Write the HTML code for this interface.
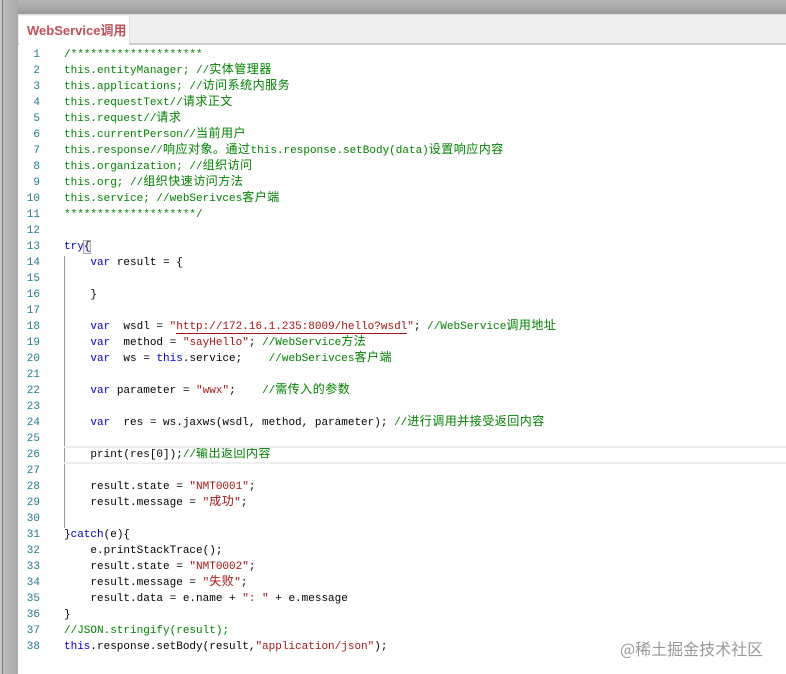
<!DOCTYPE html>
<html><head><meta charset="utf-8"><style>
*{margin:0;padding:0;box-sizing:border-box}
body{width:786px;height:674px;overflow:hidden;background:#fff;position:relative;font-family:"Liberation Sans","Noto Sans CJK SC",sans-serif}
.top{position:absolute;left:0;top:0;width:786px;height:14px;background:linear-gradient(#b8b8b8,#9a9a9a)}
.left{position:absolute;left:0;top:0;width:18px;height:674px;background:linear-gradient(90deg,#c8c8c8 0,#c8c8c8 2px,#777 2px,#777 3px,#bdbdbd 3px,#a8a8a8 18px)}
.tabbar{position:absolute;left:18px;top:14px;width:768px;height:31px;background:#eee;border-top:1px solid #ddd;border-bottom:2px solid #ccc}
.tab{position:absolute;left:1px;top:1px;width:111px;height:29px;background:#fff;border-right:1px solid #ddd;color:#c0505a;font-weight:bold;font-size:13px;line-height:30px;padding-left:8px}
.code{position:absolute;left:18px;top:47px;right:0;font-family:"Liberation Mono",monospace;font-size:11px}
.l{height:16px;line-height:16px;white-space:pre;position:relative}
.n{position:absolute;left:0;top:0;width:22px;text-align:right;color:#237893;font-size:11px}
.t{position:absolute;left:46px;top:0;height:16px;line-height:16px;color:#000}
.c{color:#008000}.k{color:#0000cc}.s{color:#a31515}
.guide{position:absolute;left:64px;top:256px;width:1px;height:272px;background:#999}
.wm{position:absolute;left:620px;top:636px;color:#999;font-size:16px;font-family:"Noto Sans CJK SC",sans-serif}
.u{border-bottom:1px solid #a31515}
.b{outline:1px solid #aaa;background:#eef}
.code span.z{font-family:"Noto Sans CJK SC",sans-serif;font-size:12px;letter-spacing:0.5px;line-height:0}
</style></head><body>
<div class="top"></div><div class="left"></div>
<div class="tabbar"><div class="tab">WebService调用</div></div>
<div class="guide"></div>
<div class="code">
<div class="l"><span class="n">1</span><span class="t c">/********************</span></div>
<div class="l"><span class="n">2</span><span class="t c">this.entityManager; //<span class="z">实体管理器</span></span></div>
<div class="l"><span class="n">3</span><span class="t c">this.applications; //<span class="z">访问系统内服务</span></span></div>
<div class="l"><span class="n">4</span><span class="t c">this.requestText//<span class="z">请求正文</span></span></div>
<div class="l"><span class="n">5</span><span class="t c">this.request//<span class="z">请求</span></span></div>
<div class="l"><span class="n">6</span><span class="t c">this.currentPerson//<span class="z">当前用户</span></span></div>
<div class="l"><span class="n">7</span><span class="t c">this.response//<span class="z">响应对象。通过</span>this.response.setBody(data)<span class="z">设置响应内容</span></span></div>
<div class="l"><span class="n">8</span><span class="t c">this.organization; //<span class="z">组织访问</span></span></div>
<div class="l"><span class="n">9</span><span class="t c">this.org; //<span class="z">组织快速访问方法</span></span></div>
<div class="l"><span class="n">10</span><span class="t c">this.service; //webSerivces<span class="z">客户端</span></span></div>
<div class="l"><span class="n">11</span><span class="t c">********************/</span></div>
<div class="l"><span class="n">12</span></div>
<div class="l"><span class="n">13</span><span class="t"><span class="k">try</span><span class="b">{</span></span></div>
<div class="l"><span class="n">14</span><span class="t">    <span class="k">var</span> result = {</span></div>
<div class="l"><span class="n">15</span></div>
<div class="l"><span class="n">16</span><span class="t">    }</span></div>
<div class="l"><span class="n">17</span></div>
<div class="l"><span class="n">18</span><span class="t">    <span class="k">var</span>  wsdl = <span class="s">"<span class="u">http://172.16.1.235:8009/hello?wsdl</span>"</span>; <span class="c">//WebService<span class="z">调用地址</span></span></span></div>
<div class="l"><span class="n">19</span><span class="t">    <span class="k">var</span>  method = <span class="s">"sayHello"</span>; <span class="c">//WebService<span class="z">方法</span></span></span></div>
<div class="l"><span class="n">20</span><span class="t">    <span class="k">var</span>  ws = <span class="k">this</span>.service;    <span class="c">//webSerivces<span class="z">客户端</span></span></span></div>
<div class="l"><span class="n">21</span></div>
<div class="l"><span class="n">22</span><span class="t">    <span class="k">var</span> parameter = <span class="s">"wwx"</span>;    <span class="c">//<span class="z">需传入的参数</span></span></span></div>
<div class="l"><span class="n">23</span></div>
<div class="l"><span class="n">24</span><span class="t">    <span class="k">var</span>  res = ws.jaxws(wsdl, method, parameter); <span class="c">//<span class="z">进行调用并接受返回内容</span></span></span></div>
<div class="l"><span class="n">25</span></div>
<div class="l"><span class="n">26</span><span class="t">    print(res[0]);<span class="c">//<span class="z">输出返回内容</span></span></span><div style="position:absolute;left:46px;right:0;top:-1px;height:18px;border-top:2px solid #eee;border-bottom:2px solid #eee"></div></div>
<div class="l"><span class="n">27</span></div>
<div class="l"><span class="n">28</span><span class="t">    result.state = <span class="s">"NMT0001"</span>;</span></div>
<div class="l"><span class="n">29</span><span class="t">    result.message = <span class="s">"<span class="z">成功</span>"</span>;</span></div>
<div class="l"><span class="n">30</span></div>
<div class="l"><span class="n">31</span><span class="t">}<span class="k">catch</span>(e){</span></div>
<div class="l"><span class="n">32</span><span class="t">    e.printStackTrace();</span></div>
<div class="l"><span class="n">33</span><span class="t">    result.state = <span class="s">"NMT0002"</span>;</span></div>
<div class="l"><span class="n">34</span><span class="t">    result.message = <span class="s">"<span class="z">失败</span>"</span>;</span></div>
<div class="l"><span class="n">35</span><span class="t">    result.data = e.name + <span class="s">": "</span> + e.message</span></div>
<div class="l"><span class="n">36</span><span class="t">}</span></div>
<div class="l"><span class="n">37</span><span class="t c">//JSON.stringify(result);</span></div>
<div class="l"><span class="n">38</span><span class="t"><span class="k">this</span>.response.setBody(result,<span class="s">"application/json"</span>);</span></div>
</div>
<div class="wm">@稀土掘金技术社区</div>
</body></html>
